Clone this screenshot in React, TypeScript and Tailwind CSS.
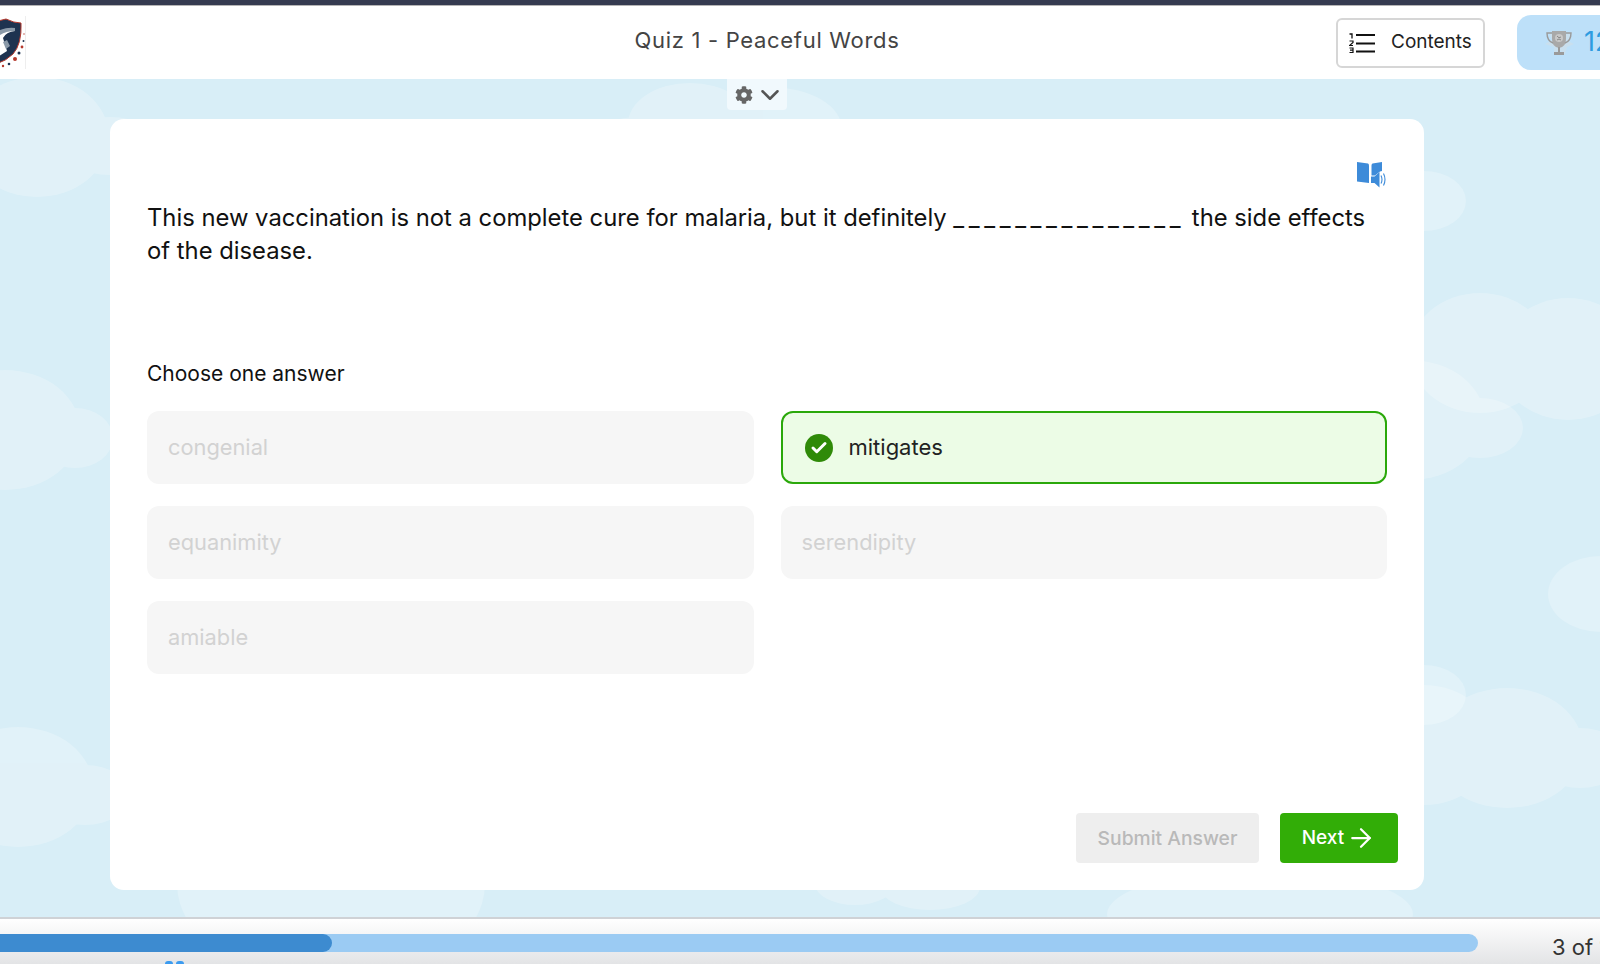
import { Check, ChevronDown, ArrowRight } from 'lucide-react';
import { FaCog } from 'react-icons/fa';

const FONT = "font-['Inter','Noto_Sans',sans-serif]";

// each cloud is a few overlapping ellipses: cx, cy, rx, ry
const CLOUDS = [
  [[37, 58, 72, 60], [110, 67, 50, 29]],
  [[5, 351, 75, 60], [75, 359, 38, 30]],
  [[18, 708, 75, 60], [85, 716, 45, 30]],
  [[640, 52, 40, 14], [690, 45, 62, 41], [770, 50, 72, 42]],
  [[1424, 122, 42, 30]],
  [[1480, 274, 70, 60], [1568, 280, 70, 61]],
  [[1410, 341, 75, 60], [1480, 349, 43, 30]],
  [[1600, 515, 52, 38]],
  [[1424, 616, 42, 30]],
  [[1424, 666, 70, 60], [1507, 669, 76, 60], [1580, 679, 45, 30]],
  [[331, 805, 154, 100]],
  [[855, 805, 40, 21], [930, 808, 50, 23]],
  [[1260, 835, 153, 44]],
];

function CloudLayer() {
  return (
    <svg className="absolute inset-0 h-full w-full" viewBox="0 0 1600 838">
      {CLOUDS.map((cloud, i) => (
        <g key={i} fill="#ffffff" opacity={0.23}>
          {cloud.map(([cx, cy, rx, ry], j) => (
            <ellipse key={j} cx={cx} cy={cy} rx={rx} ry={ry} />
          ))}
        </g>
      ))}
    </svg>
  );
}

function Shield() {
  return (
    <svg className="shrink-0" width="26" height="53" viewBox="0 0 26 53">
      <rect width="26" height="53" fill="#ffffff" />
      <path d="M25.500 0V53" stroke="#eeeeee" />
      <path d="M-14 8 L6 3 Q14 7 21 7 Q22 28 13 38 Q6 45 -4 48 Z" fill="#1e3350" stroke="#b5382c" strokeWidth="1" />
      <path d="M-4 16 Q6 12 15 12 L15 15 Q6 16 3 22 L7 35 L-4 42 Z" fill="#ffffff" />
      <path d="M0 14 Q8 11 15 12 L15 15 Q6 15 0 19 Z" fill="#8b9aa9" />
      <path d="M3 26 L7 24 L10 30 L6 33 Z" fill="#8b9aa9" />
      <circle cx="24" cy="18" r="0.7" fill="#b5382c" />
      <circle cx="23.500" cy="25" r="1" fill="#1e3350" />
      <circle cx="22" cy="31" r="1.400" fill="#b5382c" />
      <circle cx="19" cy="37" r="1.500" fill="#1e3350" />
      <circle cx="15" cy="43" r="2" fill="#b5382c" />
      <circle cx="9" cy="48" r="1.300" fill="#1e3350" />
      <circle cx="3" cy="50" r="1.200" fill="#b5382c" />
    </svg>
  );
}

function ListIcon() {
  return (
    <svg width="26" height="20" viewBox="0 0 26 20" fill="none">
      <path d="M7 2h19M7 10.500h19M7 18.500h19" stroke="#111" strokeWidth="2" />
      <path d="M0.500 1h2.500v4.500" stroke="#111" strokeWidth="1.300" />
      <path d="M0.500 8h3.500v1.500l-3.500 3h3.500" stroke="#111" strokeWidth="1.200" />
      <path d="M0.500 15h3.500v4.500h-3.500M1 17.200h3" stroke="#111" strokeWidth="1.200" />
    </svg>
  );
}

function Trophy() {
  return (
    <svg className="shrink-0" width="32" height="30" viewBox="0 0 32 30">
      <path d="M16 2l3 5 9-2-3 8 6 3-7 3-2 7-5-3-6 3 0-7-9-3 7-4-3-7 7 2z" fill="#c9dfee" />
      <path d="M9 3h14v8q0 8-7 9q-7-1-7-9z" fill="#a9a9a9" />
      <path d="M9 5H4q0 8 6 10M23 5h5q0 8-6 10" fill="none" stroke="#9a9a9a" strokeWidth="1.400" />
      <path d="M15 19h2v5h-2zM11 24h10v3H11z" fill="#9a9a9a" />
      <circle cx="16" cy="10" r="4" fill="#c8c8c8" />
      <path d="M14 8q2 3 4 1M14 12q2-2 4 0" fill="none" stroke="#777" strokeWidth="0.800" />
    </svg>
  );
}

function BookAudio() {
  return (
    <svg width="30" height="27" viewBox="0 0 30 27">
      <path d="M0 1l11 1.500q1 .5 1 2V22L0 20.500z" fill="#3d8bd9" />
      <path d="M14.500 4.500q0-1.500 1-2L25 1v9l-2 .5-5 4h-3.500z" fill="#3d8bd9" />
      <path d="M14 15.500h3.500l5-4.500v15.500l-5-4.500H14z" fill="#3d8bd9" />
      <path d="M24 14.500q2 4 0 8M26.500 12.500q3 6 0 12" fill="none" stroke="#3d8bd9" strokeWidth="1.100" />
    </svg>
  );
}

function Option({ label }: { label: string }) {
  return (
    <div className="flex h-[73px] items-center rounded-[12px] bg-[#f6f6f6] px-[21px] text-[21.800px] text-[#d2d2d2]">
      {label}
    </div>
  );
}

export default function App() {
  return (
    <div className={`flex h-screen w-full flex-col overflow-hidden bg-white ${FONT}`}>
      <div className="h-[6px] shrink-0 border-b border-[#b5b5b5] bg-[#353b50]" />

      {/* header */}
      <header className="flex h-[73px] shrink-0 items-center bg-white">
        <div className="flex w-[1336px] shrink-0 items-center">
          <Shield />
          <div className="flex-1 pb-[5px] pl-[172px] text-center text-[22px] tracking-[0.7px] text-[#444]">
            Quiz 1 - Peaceful Words
          </div>
        </div>
        <button className="flex h-[50px] w-[149px] shrink-0 items-center gap-[16px] rounded-[6px] border-2 border-[#d6d6d6] bg-white pl-[11px] text-[19px] text-[#222]">
          <ListIcon />
          <span className="pb-[1px]">Contents</span>
        </button>
        <div className="ml-[32px] flex h-[55px] flex-1 items-center gap-[9px] rounded-l-[14px] bg-[#bde0f9] pl-[26px] text-[27px] whitespace-nowrap text-[#2d9be0]">
          <Trophy />
          12
        </div>
      </header>

      {/* quiz area */}
      <main className="relative min-h-0 flex-1 bg-[#d8eef7] pt-[40px] pl-[110px]">
        <CloudLayer />
        <div className="absolute top-0 left-[727px] flex h-[31px] w-[60px] items-center gap-[2px] rounded-b-[4px] bg-[#f1f9fd] pl-[8px]">
          <FaCog className="h-[18px] w-[18px] text-[#666]" />
          <ChevronDown className="h-[30px] w-[30px] text-[#555]" strokeWidth={2} />
        </div>

        <section className="relative flex h-[771px] w-[1314px] flex-col rounded-[14px] bg-white pt-[42px] pr-[37px] pl-[37px]">
          <div className="flex h-[27px] justify-end">
            <BookAudio />
          </div>
          <p className="mt-[13px] text-[23.800px] leading-[33px] text-[#111]">
            This new vaccination is not a complete cure for malaria, but it definitely{' '}
            <span className="tracking-[4.600px]">_______________</span> the side effects
            <br />
            of the disease.
          </p>
          <p className="mt-[92px] text-[21px] leading-[30px] text-[#111]">Choose one answer</p>

          <div className="mt-[22px] grid grid-cols-2 gap-x-[27px] gap-y-[22px]">
            <Option label="congenial" />
            <div className="flex h-[73px] items-center gap-[16px] rounded-[12px] border-2 border-[#2aa80a] bg-[#ecfce6] px-[22px] text-[22px] text-[#222]">
              <span className="flex h-[28px] w-[28px] items-center justify-center rounded-full bg-[#2f8a08]">
                <Check className="h-[18px] w-[18px] text-white" strokeWidth={4} />
              </span>
              mitigates
            </div>
            <Option label="equanimity" />
            <Option label="serendipity" />
            <Option label="amiable" />
          </div>

          <div className="mt-auto mr-[-11px] mb-[27px] flex justify-end gap-[21px]">
            <button className="h-[50px] w-[183px] rounded-[4px] bg-[#eeeeee] pt-[1px] text-[19.300px] font-medium text-[#b9b9b9]">
              Submit Answer
            </button>
            <button className="flex h-[50px] w-[118px] items-center justify-center gap-[2px] rounded-[4px] bg-[#32ad07] text-[19px] font-medium text-white">
              <span className="pt-[1px]">Next</span>
              <ArrowRight className="h-[30px] w-[30px]" strokeWidth={1.800} />
            </button>
          </div>
        </section>
      </main>

      {/* progress */}
      <footer className="relative flex h-[47px] shrink-0 items-start border-t-2 border-[#cfd2d6] bg-gradient-to-b from-white to-[#e3e4e6] pt-[15px]">
        <div className="h-[18px] w-[1478px] shrink-0 overflow-hidden rounded-r-full bg-[#9bcbf3]">
          <div className="h-full w-[332px] rounded-r-full bg-[#3d8bd0]" />
        </div>
        <span className="mt-[1px] ml-[74px] text-[22px] leading-[24px] whitespace-nowrap text-[#333]">3 of 10</span>
        <div className="absolute bottom-0 left-[165px] flex gap-[3px]">
          <span className="h-[3px] w-[8px] rounded-t-full bg-[#3b9bf0]" />
          <span className="h-[3px] w-[8px] rounded-t-full bg-[#3b9bf0]" />
        </div>
      </footer>
    </div>
  );
}
